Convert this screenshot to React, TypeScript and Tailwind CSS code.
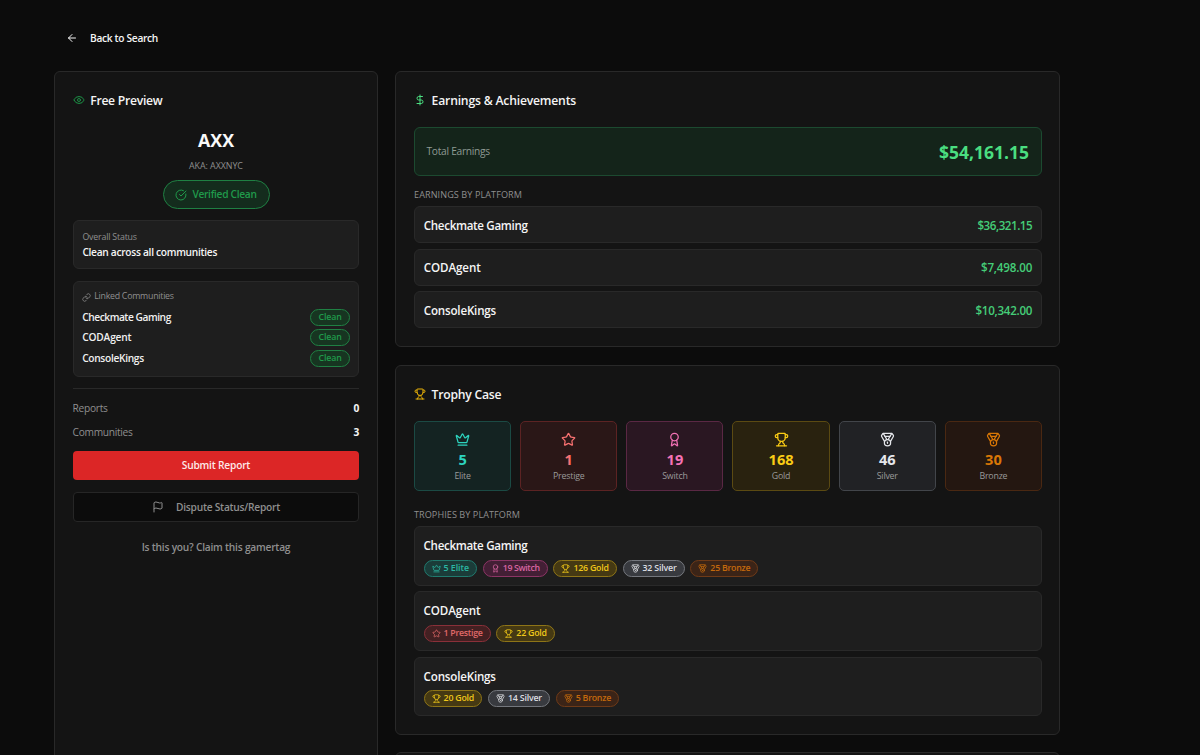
import React from "react";
import {
  ArrowLeft,
  Award,
  CircleCheckBig,
  Crown,
  DollarSign,
  Eye,
  Flag,
  Link,
  Medal,
  Star,
  Trophy,
  type LucideIcon,
} from "lucide-react";

type Tier = "Elite" | "Prestige" | "Switch" | "Gold" | "Silver" | "Bronze";

const tiers: Record<
  Tier,
  { icon: LucideIcon; text: string; tile: string; chip: string }
> = {
  Elite: {
    icon: Crown,
    text: "text-[#2dd4bf]",
    tile: "bg-[#142322] border-[#1b4a44]",
    chip: "text-[#2bb8a4] bg-[#1b3c39] border-[#207a6e] tracking-[-0.05px]",
  },
  Prestige: {
    icon: Star,
    text: "text-[#f87171]",
    tile: "bg-[#2a1717] border-[#5c2323]",
    chip: "text-[#e06a6a] bg-[#432022] border-[#8a3039] tracking-[-0.28px]",
  },
  Switch: {
    icon: Award,
    text: "text-[#f472b6]",
    tile: "bg-[#2a1722] border-[#5a2844]",
    chip: "text-[#d865a2] bg-[#431f35] border-[#8c3565] tracking-[-0.38px]",
  },
  Gold: {
    icon: Trophy,
    text: "text-[#facc15]",
    tile: "bg-[#29220f] border-[#5b4a12]",
    chip: "text-[#f0c81a] bg-[#453913] border-[#8e7517] tracking-[-0.22px]",
  },
  Silver: {
    icon: Medal,
    text: "text-[#e5e7eb]",
    tile: "bg-[#212225] border-[#42454a]",
    chip: "text-[#dcdee2] bg-[#383a3f] border-[#74777d] tracking-[-0.18px]",
  },
  Bronze: {
    icon: Medal,
    text: "text-[#d97706]",
    tile: "bg-[#241711] border-[#4a2812]",
    chip: "text-[#c4690c] bg-[#3b2417] border-[#6f3a17] tracking-[-0.24px]",
  },
};

const totals: [Tier, number][] = [
  ["Elite", 5],
  ["Prestige", 1],
  ["Switch", 19],
  ["Gold", 168],
  ["Silver", 46],
  ["Bronze", 30],
];

const platforms: {
  name: string;
  tracking: string;
  smallTracking: string;
  earnings: string;
  earningsTracking: string;
  trophies: [Tier, number][];
}[] = [
  {
    name: "Checkmate Gaming",
    tracking: "tracking-[-0.33px]",
    smallTracking: "tracking-[-0.45px]",
    earnings: "$36,321.15",
    earningsTracking: "tracking-[-0.46px]",
    trophies: [
      ["Elite", 5],
      ["Switch", 19],
      ["Gold", 126],
      ["Silver", 32],
      ["Bronze", 25],
    ],
  },
  {
    name: "CODAgent",
    tracking: "tracking-[-0.1px]",
    smallTracking: "tracking-[-0.18px]",
    earnings: "$7,498.00",
    earningsTracking: "tracking-[-0.16px]",
    trophies: [
      ["Prestige", 1],
      ["Gold", 22],
    ],
  },
  {
    name: "ConsoleKings",
    tracking: "tracking-[-0.19px]",
    smallTracking: "tracking-[-0.32px]",
    earnings: "$10,342.00",
    earningsTracking: "tracking-[-0.26px]",
    trophies: [
      ["Gold", 20],
      ["Silver", 14],
      ["Bronze", 5],
    ],
  },
];

function CardTitle({
  icon: Icon,
  color,
  tracking,
  children,
}: {
  icon: LucideIcon;
  color: string;
  tracking: string;
  children: React.ReactNode;
}) {
  return (
    <h2
      className={`flex h-5 items-center gap-[5.6px] text-[12.2px] font-semibold text-[#f5f5f5] ${tracking}`}
    >
      <Icon className={`-mt-[1.6px] size-3 shrink-0 ${color}`} strokeWidth={2} />
      {children}
    </h2>
  );
}

function PreviewCard() {
  return (
    <aside className="h-[720px] w-[324px] shrink-0 rounded-md border border-[#292929] bg-[#141414] px-[17.6px] pt-[19px]">
      <CardTitle icon={Eye} color="text-[#1b8f45]" tracking="tracking-[-0.28px]">
        Free Preview
      </CardTitle>

      <div className="flex flex-col items-center">
        <h1 className="mt-[16.5px] text-[17.8px] leading-6 font-bold text-[#fafafa]">AXX</h1>
        <p className="mt-[6px] text-[8.9px] leading-4 tracking-[-0.05px] text-[#8f8f8f]">AKA: AXXNYC</p>
        <div className="mt-[6.5px] flex h-[29px] w-[107px] items-center justify-center gap-[5px] rounded-full border border-[#1f8043] bg-[#142c1d] text-[10.2px] font-semibold tracking-[-0.3px] text-[#209a4b]">
          <CircleCheckBig className="size-3" strokeWidth={2} />
          Verified Clean
        </div>
      </div>

      <section className="mt-[11px] h-[49px] rounded-md border border-[#292929] bg-[#1e1e1e] px-[8.8px] pt-[8.7px]">
        <p className="text-[8.8px] leading-[14px] tracking-[-0.18px] text-[#8f8f8f]">Overall Status</p>
        <p className="text-[10.2px] leading-[16px] font-semibold tracking-[-0.29px] text-[#f5f5f5]">
          Clean across all communities
        </p>
      </section>

      <section className="mt-3 h-24 rounded-md border border-[#292929] bg-[#1e1e1e] px-[8.6px] pt-2">
        <p className="flex h-[14px] items-center gap-[3px] text-[8.8px] tracking-[-0.25px] text-[#8f8f8f]">
          <Link className="size-[9px]" strokeWidth={2} />
          Linked Communities
        </p>
        <ul className="mt-[2.8px] flex flex-col">
          {platforms.map((p) => (
            <li
              key={p.name}
              className={`flex h-[20.8px] items-center justify-between text-[10.2px] font-semibold text-[#f0f0f0] ${p.smallTracking}`}
            >
              {p.name}
              <span className="flex h-[17px] w-[39.4px] items-center justify-center rounded-full border border-[#1f8043] bg-[#173521] text-[8.8px] font-semibold tracking-[-0.1px] text-[#209a4b]">
                Clean
              </span>
            </li>
          ))}
        </ul>
      </section>

      <dl className="mt-[11px] flex flex-col border-t border-[#292929] pt-[7.2px] text-[10.2px]">
        <div className="flex h-6 items-center justify-between">
          <dt className="tracking-[-0.3px] text-[#8f8f8f]">Reports</dt>
          <dd className="font-bold text-[#f5f5f5]">0</dd>
        </div>
        <div className="flex h-6 items-center justify-between">
          <dt className="tracking-[-0.3px] text-[#8f8f8f]">Communities</dt>
          <dd className="font-bold text-[#f5f5f5]">3</dd>
        </div>
      </dl>

      <button className="mt-[6.8px] block h-[29px] w-full rounded-[4px] bg-[#dc2626] pt-px text-[10.2px] font-semibold tracking-[-0.2px] text-[#fdeaea]">
        Submit Report
      </button>
      <button className="mt-3 flex h-[30px] w-full items-center justify-center gap-3 rounded-[4px] border border-[#262626] bg-[#0c0c0c] pt-px text-[10.2px] font-semibold tracking-[-0.24px] text-[#8f8f8f]">
        <Flag className="-mt-px size-3" strokeWidth={2} />
        Dispute Status/Report
      </button>
      <p className="mt-[17.5px] text-center text-[10.2px] leading-4 font-semibold tracking-[-0.22px] text-[#8f8f8f]">
        Is this you? Claim this gamertag
      </p>
    </aside>
  );
}

function EarningsCard() {
  return (
    <section className="h-[276px] rounded-md border border-[#292929] bg-[#141414] pt-[19px] pr-[17.4px] pl-[18px]">
      <CardTitle icon={DollarSign} color="text-[#4ade80]" tracking="tracking-[-0.2px]">
        Earnings &amp; Achievements
      </CardTitle>
      <div className="mt-[16.4px] flex h-[49px] items-center justify-between rounded-md border border-[#1c4a30] bg-[#14241a] pr-3 pl-[11.5px]">
        <span className="text-[10.2px] tracking-[-0.27px] text-[#8f9a93]">Total Earnings</span>
        <span className="pt-px text-[17.5px] font-bold text-[#4ade80]">$54,161.15</span>
      </div>
      <h3 className="mt-[10.4px] text-[9.1px] leading-4 tracking-[0.08px] text-[#8f8f8f]">EARNINGS BY PLATFORM</h3>
      <ul className="mt-[3.2px] flex flex-col gap-[5.6px]">
        {platforms.map((p) => (
          <li
            key={p.name}
            className="flex h-[37px] items-center justify-between rounded-md border border-[#292929] bg-[#1e1e1e] px-[8.8px] pt-[1.5px] text-[11.6px] font-semibold"
          >
            <span className={`text-[#f5f5f5] ${p.tracking}`}>{p.name}</span>
            <span className={`text-[#45cd78] ${p.earningsTracking}`}>{p.earnings}</span>
          </li>
        ))}
      </ul>
    </section>
  );
}

function TrophyChip({ tier, count }: { tier: Tier; count: number }) {
  const { icon: Icon, chip } = tiers[tier];
  return (
    <span
      className={`flex h-[17px] items-center gap-[3px] rounded-full border px-[7px] text-[8.8px] font-semibold whitespace-nowrap ${chip}`}
    >
      <Icon className="size-[9px]" strokeWidth={2} />
      {count} {tier}
    </span>
  );
}

function TrophyCard() {
  return (
    <section className="mt-[18px] h-[370px] rounded-md border border-[#292929] bg-[#141414] pt-[19px] pr-[17.4px] pl-[18px]">
      <CardTitle icon={Trophy} color="text-[#eab308]" tracking="tracking-[-0.25px]">
        Trophy Case
      </CardTitle>
      <div className="mt-[16.4px] grid grid-cols-6 gap-[9px]">
        {totals.map(([tier, count]) => {
          const { icon: Icon, text, tile } = tiers[tier];
          return (
            <div
              key={tier}
              className={`flex h-[70px] flex-col items-center rounded-[5px] border pt-[9.4px] ${tile} ${text}`}
            >
              <Icon className="size-[15px]" strokeWidth={2} />
              <span className="mt-[3.4px] text-[14.6px] leading-[19px] font-bold">{count}</span>
              <span className="text-[8.8px] leading-[14px] tracking-[-0.2px] text-[#9a9a9a]">{tier}</span>
            </div>
          );
        })}
      </div>
      <h3 className="mt-[15.6px] text-[9.1px] leading-4 tracking-[0.06px] text-[#8f8f8f]">TROPHIES BY PLATFORM</h3>
      <ul className="mt-[3.4px] flex flex-col gap-[5.6px]">
        {platforms.map((p) => (
          <li
            key={p.name}
            className="flex h-[59.5px] flex-col rounded-md border border-[#292929] bg-[#1e1e1e] px-[8.6px] pt-[9px]"
          >
            <span className={`text-[11.6px] leading-[19px] font-semibold text-[#f5f5f5] ${p.tracking}`}>{p.name}</span>
            <div className="mt-[4.3px] flex gap-[5.8px]">
              {p.trophies.map(([tier, count]) => (
                <TrophyChip key={tier} tier={tier} count={count} />
              ))}
            </div>
          </li>
        ))}
      </ul>
    </section>
  );
}

export default function App() {
  return (
    <div className="h-[755px] overflow-hidden bg-[#0c0c0c] pl-[54px] font-['Open_Sans','Noto_Sans',sans-serif]">
      <header className="flex h-[71px] items-start pt-7 pl-3">
        <button className="flex h-[21px] items-center gap-3 text-[10.2px] font-semibold tracking-[-0.31px] text-[#f5f5f5]">
          <ArrowLeft className="-mt-px size-3" strokeWidth={2} />
          Back to Search
        </button>
      </header>
      <main className="flex items-start gap-[17px]">
        <PreviewCard />
        <div className="flex w-[665.4px] shrink-0 flex-col">
          <EarningsCard />
          <TrophyCard />
          <section className="mt-[17px] h-24 rounded-md border border-[#292929] bg-[#141414]" />
        </div>
      </main>
    </div>
  );
}
